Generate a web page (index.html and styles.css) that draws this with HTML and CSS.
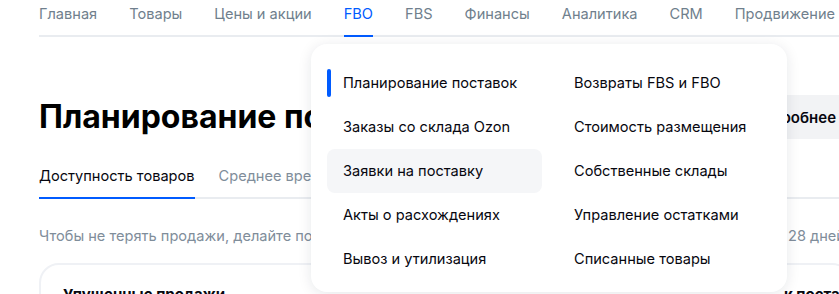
FILE: index.html
```html
<!DOCTYPE html>
<html lang="ru">
<head>
<meta charset="utf-8">
<title>Планирование поставок</title>
<link rel="stylesheet" href="styles.css">
</head>
<body>
<div class="page">
  <nav class="topnav">
    <a class="topnav-item">Главная</a>
    <a class="topnav-item">Товары</a>
    <a class="topnav-item">Цены и акции</a>
    <a class="topnav-item active">FBO</a>
    <a class="topnav-item">FBS</a>
    <a class="topnav-item">Финансы</a>
    <a class="topnav-item">Аналитика</a>
    <a class="topnav-item">CRM</a>
    <a class="topnav-item">Продвижение</a>
  </nav>

  <div class="head-row">
    <h1 class="title">Планирование поставок</h1>
    <button class="more-btn">Подробнее</button>
  </div>

  <div class="tabs">
    <a class="tab active">Доступность товаров</a>
    <a class="tab">Среднее время доставки</a>
  </div>

  <div class="hint">
    <span>Чтобы не терять продажи, делайте поставки вовремя по данным за последние</span>
    <span class="hint-end">28 дней</span>
  </div>

  <div class="card">
    <div class="card-title">Упущенные продажи</div>
    <div class="card-side">к поставке</div>
  </div>

  <div class="dropdown">
    <a class="dd-item current">Планирование поставок</a>
    <a class="dd-item">Возвраты FBS и FBO</a>
    <a class="dd-item">Заказы со склада Ozon</a>
    <a class="dd-item">Стоимость размещения</a>
    <a class="dd-item hover">Заявки на поставку</a>
    <a class="dd-item">Собственные склады</a>
    <a class="dd-item">Акты о расхождениях</a>
    <a class="dd-item">Управление остатками</a>
    <a class="dd-item">Вывоз и утилизация</a>
    <a class="dd-item">Списанные товары</a>
  </div>
</div>
</body>
</html>
```

FILE: styles.css
```css
html, body {
  margin: 0;
  padding: 0;
  overflow: hidden;
  background: #ffffff;
}

body {
  font-family: Inter, "Noto Sans", "Liberation Sans", sans-serif;
  color: #07070f;
}

.page {
  position: relative;
  width: 813px;
  padding-left: 39px;
}

.topnav {
  display: flex;
  gap: 32px;
  border-bottom: 2px solid #e9ecf0;
  width: 900px;
}

.topnav-item {
  position: relative;
  padding: 4px 0 11px;
  font-size: 14.6px;
  line-height: 20px;
  color: #707f8d;
  white-space: nowrap;
}

.topnav-item.active {
  color: #005bff;
}

.topnav-item.active::after {
  content: "";
  position: absolute;
  left: 0;
  right: 0;
  bottom: -2px;
  height: 2px;
  background: #005bff;
}

.head-row {
  display: flex;
  justify-content: space-between;
  align-items: center;
  margin-top: 58px;
}

.title {
  margin: 0;
  font-size: 32px;
  line-height: 40px;
  font-weight: 700;
  color: #000000;
  white-space: nowrap;
}

.more-btn {
  height: 44px;
  padding: 0 16px;
  border: 0;
  border-radius: 12px;
  background: #f2f3f5;
  font-family: inherit;
  font-size: 15px;
  font-weight: 600;
  color: #07070f;
}

.tabs {
  display: flex;
  gap: 24px;
  margin-top: 27px;
  border-bottom: 2px solid #e9ecf0;
}

.tab {
  position: relative;
  padding-bottom: 11px;
  font-size: 14.6px;
  line-height: 20px;
  color: #808d9a;
  white-space: nowrap;
}

.tab.active {
  color: #07070f;
}

.tab.active::after {
  content: "";
  position: absolute;
  left: 0;
  right: 0;
  bottom: -2px;
  height: 2px;
  background: #005bff;
}

.hint {
  display: grid;
  grid-template-columns: 1fr 64px;
  margin-top: 27px;
  font-size: 14.6px;
  line-height: 20px;
  color: #808d9a;
  white-space: nowrap;
}

.card {
  display: grid;
  grid-template-columns: 1fr 44px;
  margin-top: 17px;
  padding: 20px 22px;
  border: 2px solid #eff1f5;
  border-radius: 20px;
  font-size: 15px;
  line-height: 20px;
  font-weight: 700;
  white-space: nowrap;
}

.dropdown {
  position: absolute;
  left: 311px;
  top: 44px;
  width: 446px;
  display: grid;
  grid-template-columns: 215px 215px;
  column-gap: 16px;
  padding: 17px 14px 11px 16px;
  background: #ffffff;
  border-radius: 16px;
  box-shadow: 0 2px 14px rgba(0, 26, 52, 0.1);
}

.dd-item {
  position: relative;
  display: flex;
  align-items: center;
  height: 44px;
  padding-left: 16px;
  border-radius: 8px;
  font-size: 14.6px;
  color: #07070f;
  white-space: nowrap;
}

.dd-item.current::before {
  content: "";
  position: absolute;
  left: 0;
  top: 8px;
  width: 4px;
  height: 28px;
  border-radius: 2px;
  background: #005bff;
}

.dd-item.hover {
  background: #f5f6f8;
}
```
